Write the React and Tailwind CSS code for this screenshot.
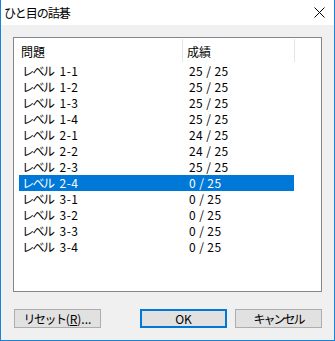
import React from 'react';

const rows = [
  ['1-1', '25 / 25'],
  ['1-2', '25 / 25'],
  ['1-3', '25 / 25'],
  ['1-4', '25 / 25'],
  ['2-1', '24 / 25'],
  ['2-2', '24 / 25'],
  ['2-3', '25 / 25'],
  ['2-4', '0 / 25'],
  ['3-1', '0 / 25'],
  ['3-2', '0 / 25'],
  ['3-3', '0 / 25'],
  ['3-4', '0 / 25'],
];

const font = { fontFamily: '"Noto Sans CJK JP", "Noto Sans", sans-serif' };

export default function App() {
  const selected = 7;

  return (
    <div
      className="w-[335px] h-[341px] bg-[#f0f0f0] border-x border-b border-[#1883d7] flex flex-col text-[12px] text-black"
      style={font}
    >
      {/* TITLE BAR */}
      <div className="h-[25px] bg-white flex items-center justify-between pl-[3px] pr-[9px]">
        <span className="leading-none tracking-[-1px]">ひと目の詰碁</span>
        <svg width="11" height="11" viewBox="0 0 11 11" className="text-black">
          <path d="M0.5 0.5 L10.5 10.5 M10.5 0.5 L0.5 10.5" stroke="currentColor" strokeWidth="1" />
        </svg>
      </div>

      {/* LIST */}
      <div className="mt-[12px] mx-[12px] h-[255px] bg-white border border-[#828790] flex flex-col">
        <div className="h-[25px] flex pt-[1px]">
          <div className="w-[168px] pl-[7px] flex items-center pt-[2px]">問題</div>
          <div className="w-px h-[23px] bg-[#e5e5e5]" />
          <div className="w-[111px] pl-[4px] flex items-center pt-[2px]">成績</div>
          <div className="w-px h-[23px] bg-[#e5e5e5]" />
        </div>
        {rows.map(([level, score], i) => (
          <div
            key={level}
            className={`ml-[5px] w-[275px] h-[16px] flex items-center leading-none ${
              i === selected ? 'bg-[#0078d7] text-white' : ''
            }`}
          >
            <span className="w-[170px] pl-[3px] flex">
              <span className="tracking-[-1.5px]">レベル</span>
              <span className="ml-[6px] tracking-[0.5px]">{level}</span>
            </span>
            <span className="whitespace-pre tracking-[0.4px]">{score}</span>
          </div>
        ))}
      </div>

      {/* BUTTONS */}
      <div className="mt-[17px] flex pl-[13px]">
        <button className="w-[87px] h-[19px] bg-[#e1e1e1] border border-[#adadad] flex items-center justify-center leading-none">
          <span className="tracking-[-1.5px]">リセット</span>(<span className="underline">R</span>)...
        </button>
        <button className="ml-[39px] w-[87px] h-[19px] bg-[#e1e1e1] border-2 border-[#0078d7] flex items-center justify-center leading-none">
          OK
        </button>
        <button className="ml-[8px] w-[87px] h-[19px] bg-[#e1e1e1] border border-[#adadad] flex items-center justify-center leading-none tracking-[-2px]">
          キャンセル
        </button>
      </div>
    </div>
  );
}
